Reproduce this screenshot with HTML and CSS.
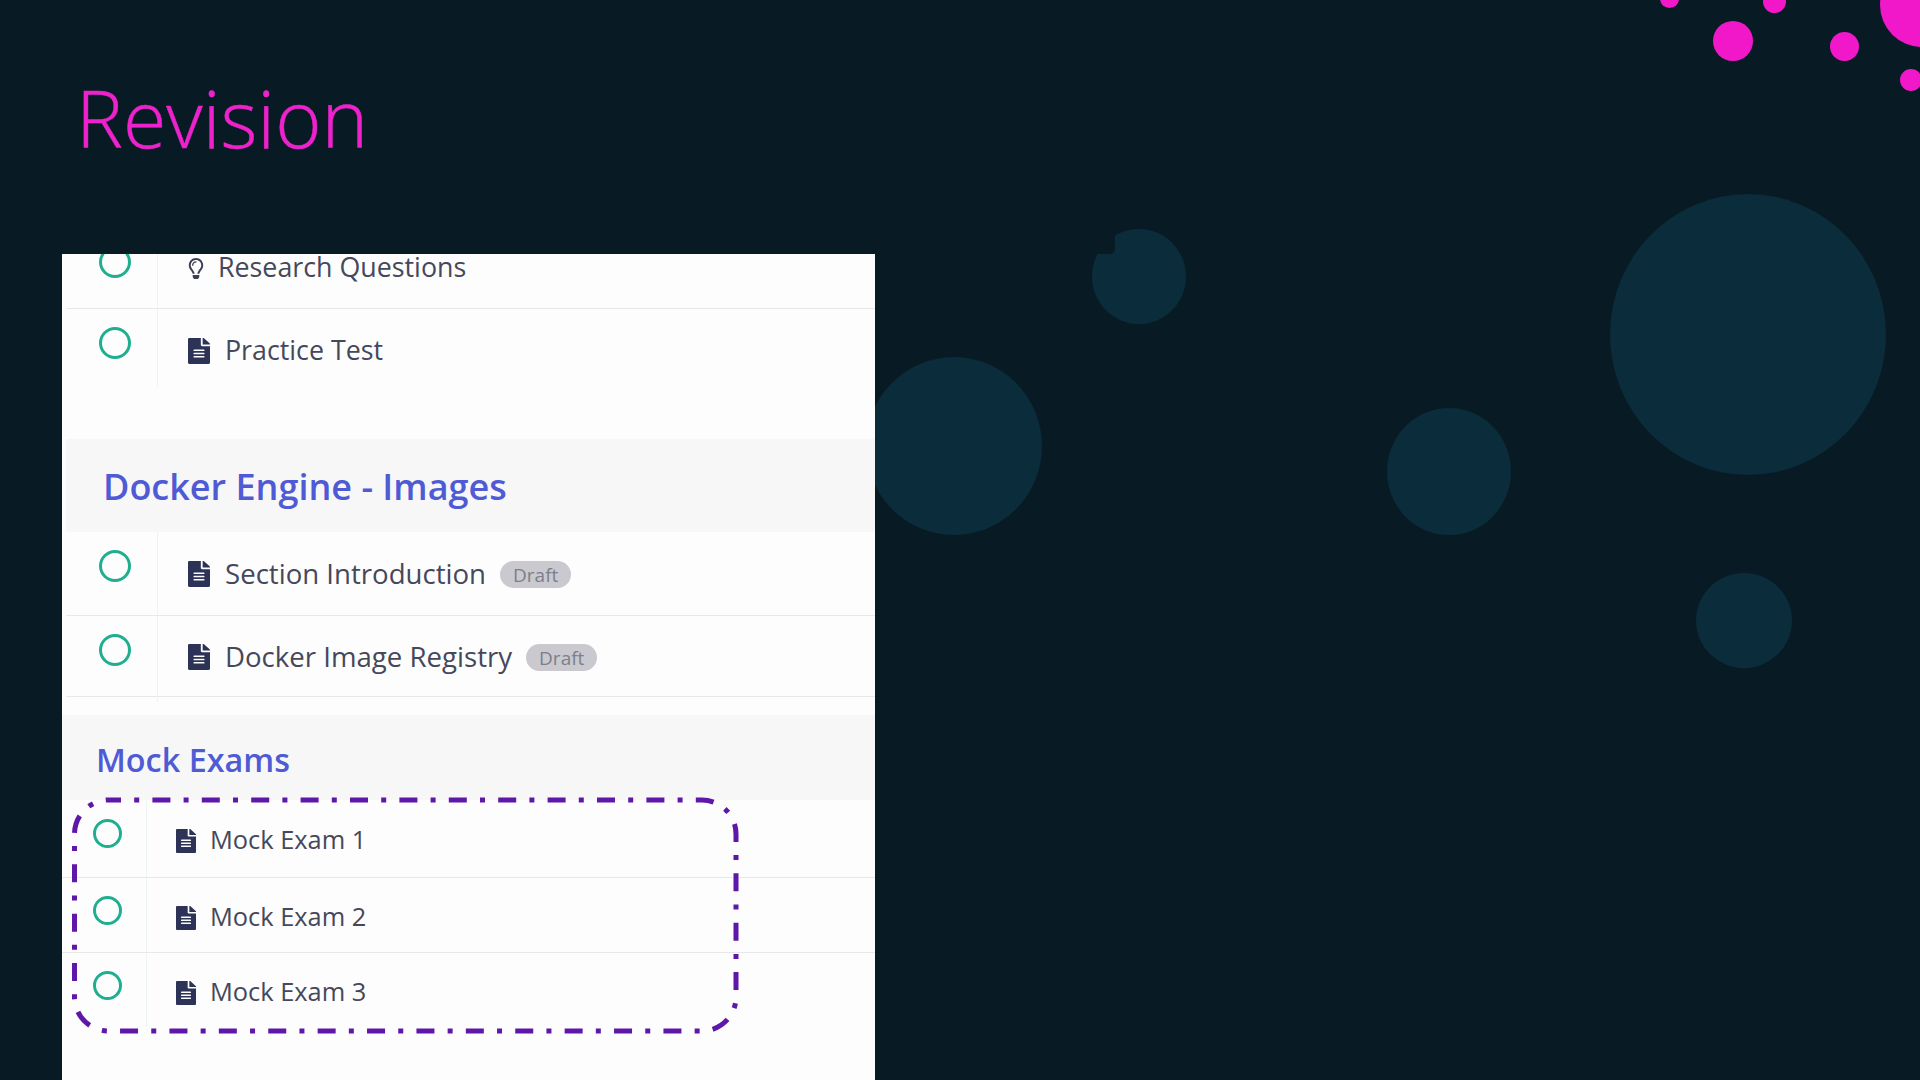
FILE: index.html
```html
<!DOCTYPE html>
<html lang="en">

<head>
    <meta charset="UTF-8">
    <meta name="viewport" content="width=device-width, initial-scale=1.0">
    <title>Revision</title>
    <link rel="stylesheet" href="styles.css">
</head>

<body>
    <svg class="icon-defs" width="0" height="0">
        <symbol id="icon-file" viewBox="0 0 384 512" preserveAspectRatio="none">
            <path d="M224 136V0H24C10.7 0 0 10.7 0 24v464c0 13.3 10.7 24 24 24h336c13.3 0 24-10.7 24-24V160H248c-13.2 0-24-10.8-24-24zm64 236c0 6.6-5.4 12-12 12H108c-6.6 0-12-5.4-12-12v-8c0-6.6 5.4-12 12-12h168c6.6 0 12 5.4 12 12v8zm0-64c0 6.6-5.4 12-12 12H108c-6.6 0-12-5.4-12-12v-8c0-6.6 5.4-12 12-12h168c6.6 0 12 5.4 12 12v8zm0-72v8c0 6.6-5.4 12-12 12H108c-6.6 0-12-5.4-12-12v-8c0-6.6 5.4-12 12-12h168c6.6 0 12 5.4 12 12zm96-114.1v6.1H256V0h6.1c6.4 0 12.5 2.5 17 7l97.9 98c4.5 4.5 7 10.6 7 16.9z" />
        </symbol>
        <symbol id="icon-bulb" viewBox="0 0 352 512">
            <path d="M176 80c-52.94 0-96 43.06-96 96 0 8.84 7.16 16 16 16s16-7.16 16-16c0-35.3 28.72-64 64-64 8.84 0 16-7.16 16-16s-7.16-16-16-16zM96.06 459.17c0 3.15.93 6.22 2.68 8.84l24.51 36.84c2.97 4.46 7.97 7.14 13.32 7.14h78.85c5.36 0 10.36-2.68 13.32-7.14l24.51-36.84c1.74-2.62 2.67-5.7 2.68-8.84l.05-43.18H96.02l.04 43.18zM176 0C73.72 0 0 82.97 0 176c0 44.37 16.45 84.85 43.56 115.78 16.64 18.99 42.74 58.8 52.42 92.16v.06h48v-.12c-.01-4.77-.72-9.51-2.15-14.07-5.59-17.81-22.82-64.77-62.17-109.67-20.54-23.43-31.52-53.15-31.61-84.14-.2-73.64 59.67-128 127.95-128 70.58 0 128 57.42 128 128 0 30.97-11.24 60.85-31.65 84.14-39.11 44.61-56.42 91.47-62.1 109.46a47.507 47.507 0 0 0-2.22 14.3v.1h48v-.05c9.68-33.37 35.78-73.18 52.42-92.16C335.55 260.85 352 220.37 352 176 352 78.8 273.2 0 176 0z" />
        </symbol>
    </svg>

    <div class="slide">
        <!-- Background bubbles -->
        <div class="bubble bubble-big"></div>
        <div class="bubble bubble-notched"></div>
        <div class="bubble-notch"></div>
        <div class="bubble bubble-left"></div>
        <div class="bubble bubble-mid"></div>
        <div class="bubble bubble-low"></div>

        <div class="dot dot-1"></div>
        <div class="dot dot-2"></div>
        <div class="dot dot-3"></div>
        <div class="dot dot-4"></div>
        <div class="dot dot-5"></div>
        <div class="dot dot-6"></div>

        <h1 class="slide-title">Revision</h1>

        <div class="panel">
            <div class="list list-first">
                <div class="row row-cut">
                    <div class="row-check"><span class="circle"></span></div>
                    <div class="row-body">
                        <svg class="icon-bulb"><use href="#icon-bulb" /></svg>
                        <span class="row-text">Research Questions</span>
                    </div>
                </div>
                <div class="row row-last">
                    <div class="row-check"><span class="circle"></span></div>
                    <div class="row-body">
                        <svg class="icon-file"><use href="#icon-file" /></svg>
                        <span class="row-text">Practice Test</span>
                    </div>
                </div>
            </div>

            <h2 class="section-head">Docker Engine - Images</h2>
            <div class="list list-images">
                <div class="row row-intro">
                    <div class="row-check"><span class="circle"></span></div>
                    <div class="row-body">
                        <svg class="icon-file"><use href="#icon-file" /></svg>
                        <span class="row-text">Section Introduction</span>
                        <span class="badge">Draft</span>
                    </div>
                </div>
                <div class="row row-registry">
                    <div class="row-check"><span class="circle"></span></div>
                    <div class="row-body">
                        <svg class="icon-file"><use href="#icon-file" /></svg>
                        <span class="row-text">Docker Image Registry</span>
                        <span class="badge">Draft</span>
                    </div>
                </div>
            </div>

            <h2 class="section-head section-head-small">Mock Exams</h2>
            <div class="list list-mock">
                <div class="row">
                    <div class="row-check"><span class="circle"></span></div>
                    <div class="row-body">
                        <svg class="icon-file"><use href="#icon-file" /></svg>
                        <span class="row-text">Mock Exam 1</span>
                    </div>
                </div>
                <div class="row">
                    <div class="row-check"><span class="circle"></span></div>
                    <div class="row-body">
                        <svg class="icon-file"><use href="#icon-file" /></svg>
                        <span class="row-text">Mock Exam 2</span>
                    </div>
                </div>
                <div class="row row-last">
                    <div class="row-check"><span class="circle"></span></div>
                    <div class="row-body">
                        <svg class="icon-file"><use href="#icon-file" /></svg>
                        <span class="row-text">Mock Exam 3</span>
                    </div>
                </div>

                <!-- Highlight drawn over the three exams -->
                <svg class="dash-frame" width="672" height="244">
                    <rect x="4.5" y="6" width="661.5" height="231" rx="34" ry="34" />
                </svg>
            </div>
        </div>
    </div>
</body>

</html>
```

FILE: styles.css
```css
html,
body {
    margin: 0;
    padding: 0;
}

body {
    font-family: "Open Sans", "Noto Sans", sans-serif;
    background-color: #081b25;
}

.icon-defs {
    position: absolute;
}

.slide {
    position: relative;
    width: 1920px;
    height: 1080px;
    overflow: hidden;
    background-color: #081b25;
}

/* Bubbles */

.bubble,
.dot {
    position: absolute;
    border-radius: 50%;
}

.bubble {
    background-color: #0b2c3a;
}

.bubble-big {
    left: 1610px;
    top: 194px;
    width: 276px;
    height: 281px;
}

.bubble-notched {
    left: 1092px;
    top: 229px;
    width: 94px;
    height: 95px;
}

.bubble-notch {
    position: absolute;
    left: 1088px;
    top: 225px;
    width: 27px;
    height: 29px;
    background-color: #081b25;
    border-bottom-right-radius: 5px;
}

.bubble-left {
    left: 866px;
    top: 357px;
    width: 176px;
    height: 178px;
}

.bubble-mid {
    left: 1387px;
    top: 408px;
    width: 124px;
    height: 127px;
}

.bubble-low {
    left: 1696px;
    top: 573px;
    width: 96px;
    height: 95px;
}

.dot {
    background-color: #f018c8;
}

.dot-1 {
    left: 1713px;
    top: 21px;
    width: 40px;
    height: 40px;
}

.dot-2 {
    left: 1763px;
    top: -10px;
    width: 23px;
    height: 23px;
}

.dot-3 {
    left: 1830px;
    top: 32px;
    width: 29px;
    height: 29px;
}

.dot-4 {
    left: 1880px;
    top: -37px;
    width: 84px;
    height: 84px;
}

.dot-5 {
    left: 1900px;
    top: 69px;
    width: 22px;
    height: 22px;
}

.dot-6 {
    left: 1660px;
    top: -11px;
    width: 19px;
    height: 19px;
}

/* Title */

.slide-title {
    position: relative;
    margin: 0;
    height: 254px;
    padding: 65px 0 0 76px;
    box-sizing: border-box;
    font-size: 79px;
    font-weight: 300;
    line-height: 106px;
    color: #ee22cc;
    -webkit-text-stroke: 0.5px #ee22cc;
}

/* Panel */

.panel {
    position: relative;
    width: 813px;
    height: 826px;
    margin-left: 62px;
    background-color: #fdfdfd;
}

.list-first {
    height: 185px;
}

.row {
    display: flex;
    height: 82px;
    margin-left: 4px;
    border-bottom: 1px solid #e8e8e8;
}

.row-last {
    border-bottom: 0;
    height: 78px;
}

/* First row is scrolled past the top of the panel */
.row-cut {
    height: 54px;
}

.row-cut .row-check {
    padding-top: 0;
    overflow: hidden;
}

.row-cut .circle {
    margin-top: -8px;
}

.row-cut .row-body {
    padding-top: 4px;
}

.row-cut .row-text {
    margin-top: -4px;
}

.row-intro {
    height: 83px;
}

.row-registry {
    height: 86px;
    border-bottom: 0;
    background-image: linear-gradient(#e8e8e8, #e8e8e8);
    background-repeat: no-repeat;
    background-position: 0 80px;
    background-size: 100% 1px;
}

.row-check {
    width: 92px;
    padding: 18px 0 0 32.5px;
    box-sizing: border-box;
    border-right: 1px solid #eef4f4;
}

.circle {
    display: block;
    width: 32px;
    height: 32px;
    box-sizing: border-box;
    border: 3px solid #1fae8f;
    border-radius: 50%;
}

.row-body {
    display: flex;
    align-items: flex-start;
    padding: 29px 0 0 30px;
}

.row-registry .row-body {
    padding-top: 28px;
}

.icon-file {
    flex: none;
    width: 22px;
    height: 26px;
    margin-right: 15px;
    fill: #2d3357;
}

.icon-bulb {
    flex: none;
    width: 16px;
    height: 21px;
    margin-right: 14px;
    fill: #3a3f55;
}

.row-text {
    margin-top: -1px;
    font-size: 26.8px;
    line-height: 26px;
    color: #45485b;
}

.list-images .row-text {
    font-size: 27.6px;
}

.badge {
    height: 27px;
    margin-left: 14px;
    padding: 0 13px;
    border-radius: 14px;
    background-color: #c9c9cf;
    font-size: 19px;
    line-height: 28px;
    color: #7c7f8a;
}

/* Section headings */

.section-head {
    height: 93px;
    margin: 0 0 0 4px;
    padding-left: 37px;
    background-color: #f7f7f8;
    font-size: 36px;
    font-weight: 600;
    line-height: 95px;
    color: #4f5bd5;
}

.section-head-small {
    height: 85px;
    margin-top: 13px;
    margin-left: 0;
    padding-left: 34px;
    font-size: 32.4px;
    line-height: 88px;
}

/* Mock exams list */

.list-mock {
    position: relative;
}

.list-mock .row {
    height: 74px;
    margin-left: 0;
}

.list-mock .row:first-child {
    height: 76px;
    padding-top: 1px;
}

.list-mock .row-check {
    width: 85px;
    padding: 17.5px 0 0 31px;
}

.list-mock .circle {
    width: 29px;
    height: 29px;
}

.list-mock .row-body {
    padding: 28px 0 0 29px;
}

.list-mock .icon-file {
    width: 20px;
    height: 24px;
    margin-right: 14px;
}

.list-mock .row-text {
    margin-top: -3px;
    font-size: 25.4px;
}

.dash-frame {
    position: absolute;
    left: 8px;
    top: -6px;
}

.dash-frame rect {
    fill: none;
    stroke: #5e17a8;
    stroke-width: 5;
    stroke-dasharray: 18 13.2 5 13.2;
    stroke-dashoffset: 5.5;
}
```
